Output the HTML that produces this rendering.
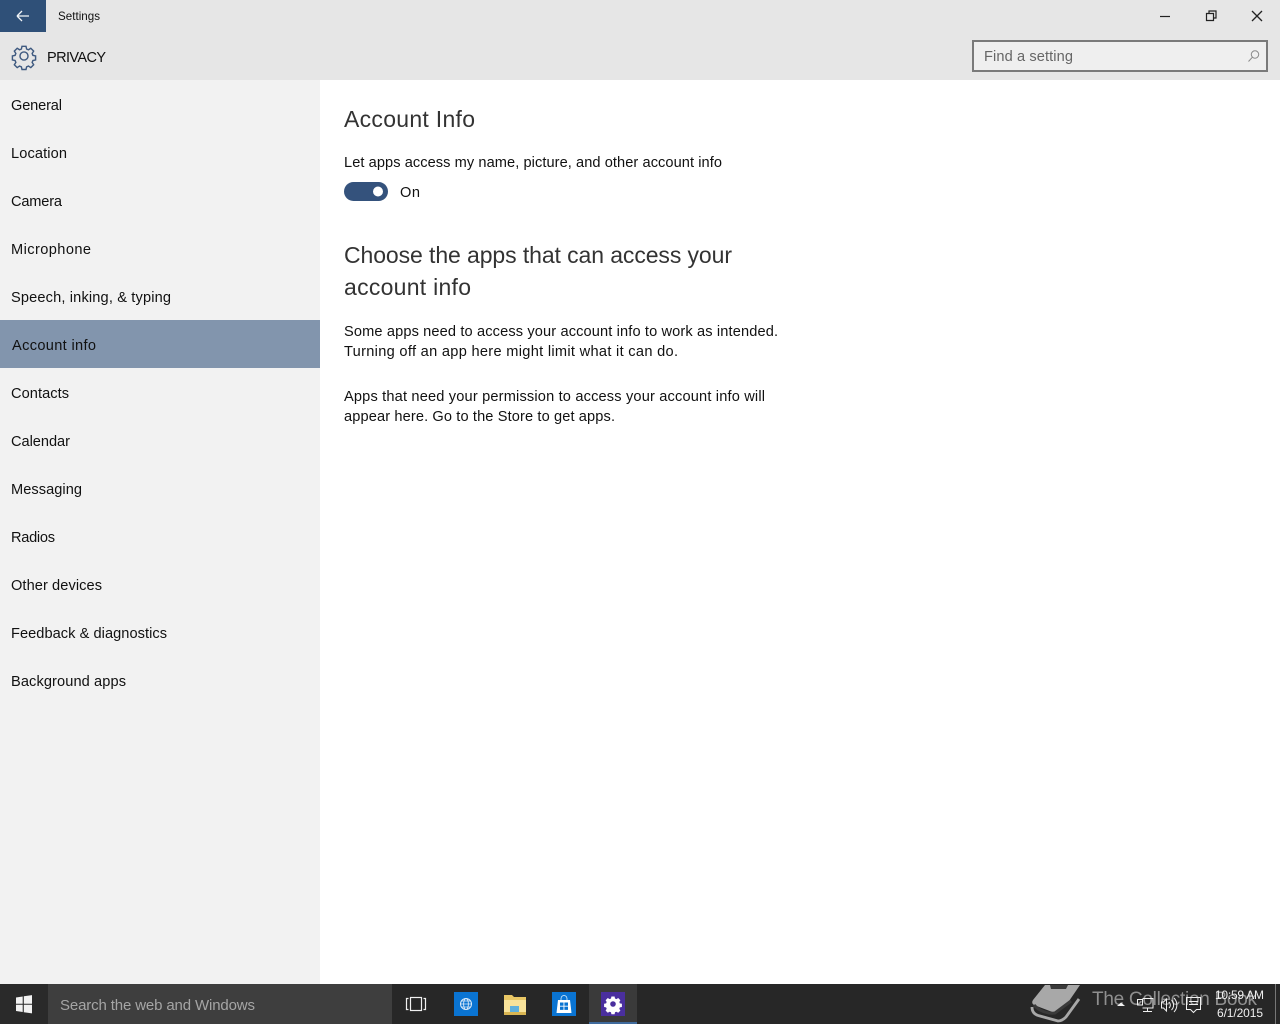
<!DOCTYPE html>
<html lang="en">
<head>
<meta charset="utf-8">
<title>Settings</title>
<style>
html,body{margin:0;padding:0;background:#fff;width:1280px;height:1024px;overflow:hidden}
svg{display:block;position:absolute;left:0;top:0}
text{font-family:"Liberation Sans",sans-serif;font-size:14.6px;fill:#111;white-space:pre}
.h{font-size:23px;fill:#333}
</style>
</head>
<body>
<svg width="1280" height="1024" viewBox="0 0 1280 1024" xmlns="http://www.w3.org/2000/svg">
  <!-- backgrounds -->
  <rect x="0" y="0" width="1280" height="1024" fill="#ffffff"/>
  <rect x="0" y="0" width="1280" height="80" fill="#e6e6e6"/>
  <rect x="0" y="80" width="320" height="904" fill="#f2f2f2"/>

  <!-- title bar -->
  <rect x="0" y="0" width="46" height="32" fill="#2f5078"/>
  <path d="M17 16H29M17 16l5-5M17 16l5 5" fill="none" stroke="#f2f5f8" stroke-width="1.3"/>
  <text x="58" y="20" style="font-size:11.6px" textLength="42" lengthAdjust="spacing">Settings</text>

  <!-- window buttons -->
  <path d="M1160 16.500H1170" stroke="#222" stroke-width="1.2"/>
  <path d="M1206.500 13.500h7v7h-7zM1209 13.500v-2.500h7v7h-2.500" fill="none" stroke="#222" stroke-width="1.2"/>
  <path d="M1252 11l10 10M1262 11l-10 10" stroke="#222" stroke-width="1.3"/>

  <!-- privacy header -->
  <g transform="translate(24 56) scale(.84)" fill="none" stroke="#3f5a80" stroke-width="1.700">
    <path d="M-2.400-11.500h4.800l.7 3.200 2.200.9 2.800-1.800 3.400 3.400-1.800 2.800.9 2.200 3.200.7v4.800l-3.200.7-.9 2.200 1.800 2.800-3.400 3.400-2.800-1.800-2.200.9-.7 3.200h-4.800l-.7-3.200-2.200-.9-2.800 1.800-3.400-3.400 1.800-2.800-.9-2.200-3.200-.7v-4.800l3.200-.7.900-2.200-1.800-2.800 3.400-3.400 2.800 1.800 2.200-.9z"/>
    <circle cx="0" cy="0" r="4.800"/>
  </g>
  <text x="47" y="62" style="font-size:14.500px" textLength="59" lengthAdjust="spacing">PRIVACY</text>

  <!-- search -->
  <rect x="973" y="41" width="294" height="30" fill="#efefef" stroke="#7a7a7a" stroke-width="2"/>
  <text x="984" y="61" style="font-size:14.600px;fill:#666" textLength="89" lengthAdjust="spacing">Find a setting</text>
  <circle cx="1255" cy="54.500" r="3.700" fill="none" stroke="#8a8a8a" stroke-width="1"/>
  <path d="M1252.300 57.300l-3.800 4.200" stroke="#8a8a8a" stroke-width="1"/>

  <!-- sidebar -->
  <rect x="0" y="320" width="320" height="48" fill="#8295ad"/>
  <text x="11" y="110" textLength="51" lengthAdjust="spacing">General</text>
  <text x="11" y="158" textLength="56" lengthAdjust="spacing">Location</text>
  <text x="11" y="206" textLength="51" lengthAdjust="spacing">Camera</text>
  <text x="11" y="254" textLength="80" lengthAdjust="spacing">Microphone</text>
  <text x="11" y="302" textLength="160" lengthAdjust="spacing">Speech, inking, &amp; typing</text>
  <text x="12" y="350" textLength="84" lengthAdjust="spacing">Account info</text>
  <text x="11" y="398" textLength="58" lengthAdjust="spacing">Contacts</text>
  <text x="11" y="446" textLength="59" lengthAdjust="spacing">Calendar</text>
  <text x="11" y="494" textLength="71" lengthAdjust="spacing">Messaging</text>
  <text x="11" y="542" textLength="44" lengthAdjust="spacing">Radios</text>
  <text x="11" y="590" textLength="91" lengthAdjust="spacing">Other devices</text>
  <text x="11" y="638" textLength="156" lengthAdjust="spacing">Feedback &amp; diagnostics</text>
  <text x="11" y="686" textLength="115" lengthAdjust="spacing">Background apps</text>

  <!-- content -->
  <text class="h" x="344" y="127" textLength="131" lengthAdjust="spacing">Account Info</text>
  <text x="344" y="167" textLength="378" lengthAdjust="spacing">Let apps access my name, picture, and other account info</text>
  <rect x="344" y="182" width="44" height="19" rx="9.500" fill="#34527c"/>
  <circle cx="378" cy="191.500" r="5" fill="#fff"/>
  <text x="400" y="197" textLength="20" lengthAdjust="spacing">On</text>
  <text class="h" x="344" y="263" textLength="388" lengthAdjust="spacing">Choose the apps that can access your</text>
  <text class="h" x="344" y="295" textLength="127" lengthAdjust="spacing">account info</text>
  <text x="344" y="336" textLength="434" lengthAdjust="spacing">Some apps need to access your account info to work as intended.</text>
  <text x="344" y="356" textLength="334" lengthAdjust="spacing">Turning off an app here might limit what it can do.</text>
  <text x="344" y="401" textLength="421" lengthAdjust="spacing">Apps that need your permission to access your account info will</text>
  <text x="344" y="421" textLength="271" lengthAdjust="spacing">appear here. Go to the Store to get apps.</text>

  <!-- taskbar -->
  <rect x="0" y="984" width="1280" height="40" fill="#272727"/>
  <rect x="0" y="984" width="48" height="40" fill="#2a2a2a"/>
  <path d="M16 997.500l6.700-1v7.200H16zM23.800 996.300l8.200-1.200v8.600h-8.200zM16 1004.800h6.700v7.200l-6.700-1zM23.800 1004.800H32v8.600l-8.200-1.200z" fill="#f2f2f2"/>
  <rect x="48" y="984" width="344" height="40" fill="#3e3e3e"/>
  <text x="60" y="1010" style="font-size:15px;fill:#a5a5a5" textLength="195" lengthAdjust="spacing">Search the web and Windows</text>

  <!-- task view -->
  <path d="M408.500 998.500h-2v11h2M423.500 998.500h2v11h-2" fill="none" stroke="#f0f0f0" stroke-width="1.200"/>
  <rect x="410.500" y="997.500" width="11" height="13" fill="none" stroke="#f0f0f0" stroke-width="1.200"/>

  <!-- edge -->
  <rect x="454" y="992" width="24" height="24" fill="#0a74d2"/>
  <circle cx="466" cy="1004" r="5.500" fill="none" stroke="#dbeaf8" stroke-width="1"/>
  <ellipse cx="466" cy="1004" rx="2.400" ry="5.500" fill="none" stroke="#dbeaf8" stroke-width=".9"/>
  <path d="M460.500 1004h11M461.500 1001h9M461.500 1007h9" stroke="#dbeaf8" stroke-width=".8"/>

  <!-- explorer -->
  <path d="M504 995h8l2 2h12v18h-22z" fill="#e9c765"/>
  <rect x="504" y="1000" width="22" height="15" fill="#f8e29a"/>
  <rect x="504" y="1012" width="22" height="3" fill="#d9b552"/>
  <rect x="510" y="1006" width="9" height="6" fill="#5fb0dc"/>

  <!-- store -->
  <rect x="552" y="992" width="24" height="24" fill="#0a74d2"/>
  <path d="M558 1000h12l1.500 13h-15z" fill="#fff"/>
  <path d="M561 1000v-1.500a3 3 0 0 1 6 0v1.500" fill="none" stroke="#dfeefa" stroke-width=".8"/>
  <path d="M560 1002.500h3.500v3.300H560zM564.400 1002.500H568v3.300h-3.600zM560 1006.600h3.500v3.300H560zM564.400 1006.600H568v3.300h-3.600z" fill="#0a74d2"/>

  <!-- settings -->
  <rect x="589" y="984" width="48" height="40" fill="#3a3a3a"/>
  <rect x="589" y="1022" width="48" height="2" fill="#3f6a9c"/>
  <rect x="601" y="992" width="24" height="24" fill="#4a2f9e"/>
  <g transform="translate(613 1004)">
    <path d="M-1.600-7.500h3.200l.4 2 1.400.6 1.800-1.100 2.200 2.200-1.100 1.800.6 1.400 2 .4v3.200l-2 .4-.6 1.400 1.100 1.800-2.200 2.200-1.800-1.100-1.400.6-.4 2h-3.200l-.4-2-1.400-.6-1.800 1.100-2.200-2.200 1.100-1.800-.6-1.400-2-.4v-3.200l2-.4.6-1.400-1.100-1.800 2.200-2.200 1.800 1.100 1.400-.6z" fill="#fff"/>
    <circle r="2.800" fill="#4a2f9e"/>
  </g>

  <!-- watermark book -->
  <path d="M1045 985H1080L1067 1004L1055 1013L1034 1005Q1031 1003 1033 1000z" fill="#a8a8a8"/>
  <path d="M1050 985h18l-2 4h-15z" fill="#3a3a3a"/>
  <path d="M1034 1005c5 6 14 9 21 8l16-12" fill="none" stroke="#3a3a3a" stroke-width="3"/>
  <path d="M1032 1007c0 5 3 8 8 9l18 5c3 0 5-1 8-4l13-18" fill="none" stroke="#a8a8a8" stroke-width="2.800"/>
  <text x="1092" y="1005" style="font-size:19px;fill:#8f8f8f" textLength="165" lengthAdjust="spacing">The Collection Book</text>

  <!-- tray -->
  <path d="M1117 1006l4-3.500 4 3.500z" fill="#f0f0f0"/>
  <g fill="none" stroke="#f0f0f0" stroke-width="1">
    <path d="M1142.500 998.500h10.500v9.500h-10.500M1137.500 999.500h5v5.500h-5zM1147.500 1008v3.500M1143 1011.500h9"/>
    <path d="M1161.500 1002h2l3-3v12l-3-3h-2z"/>
    <path d="M1169 1002a4 4 0 0 1 0 6M1171.500 1000a7 7 0 0 1 0 10M1174 998a10 10 0 0 1 0 14"/>
    <path d="M1186.500 997.500h14v12h-4l-3 3-3-3h-4zM1189 1001.500h9M1189 1004.500h9"/>
  </g>
  <text x="1215" y="999" style="font-size:12px;fill:#f0f0f0" textLength="49" lengthAdjust="spacing">10:59 AM</text>
  <text x="1217" y="1017" style="font-size:12px;fill:#f0f0f0" textLength="46" lengthAdjust="spacing">6/1/2015</text>
  <rect x="1275" y="984" width="1" height="40" fill="#777"/>
</svg>
</body>
</html>
